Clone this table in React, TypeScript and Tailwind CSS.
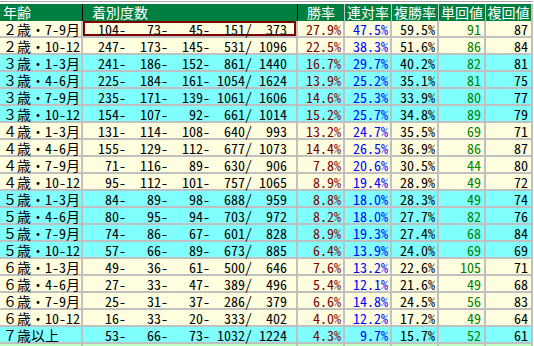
import React from "react";

type Row = {
  label: string;
  counts: number[];
  win: string;
  place2: string;
  place3: string;
  winRet: number;
  placeRet: number;
  cyan?: boolean;
};

const ROWS: Row[] = [
  { label: "２歳・7-9月", counts: [104, 73, 45, 151, 373], win: "27.9%", place2: "47.5%", place3: "59.5%", winRet: 91, placeRet: 87 },
  { label: "２歳・10-12", counts: [247, 173, 145, 531, 1096], win: "22.5%", place2: "38.3%", place3: "51.6%", winRet: 86, placeRet: 84 },
  { label: "３歳・1-3月", counts: [241, 186, 152, 861, 1440], win: "16.7%", place2: "29.7%", place3: "40.2%", winRet: 82, placeRet: 81, cyan: true },
  { label: "３歳・4-6月", counts: [225, 184, 161, 1054, 1624], win: "13.9%", place2: "25.2%", place3: "35.1%", winRet: 81, placeRet: 75, cyan: true },
  { label: "３歳・7-9月", counts: [235, 171, 139, 1061, 1606], win: "14.6%", place2: "25.3%", place3: "33.9%", winRet: 80, placeRet: 77, cyan: true },
  { label: "３歳・10-12", counts: [154, 107, 92, 661, 1014], win: "15.2%", place2: "25.7%", place3: "34.8%", winRet: 89, placeRet: 79, cyan: true },
  { label: "４歳・1-3月", counts: [131, 114, 108, 640, 993], win: "13.2%", place2: "24.7%", place3: "35.5%", winRet: 69, placeRet: 71 },
  { label: "４歳・4-6月", counts: [155, 129, 112, 677, 1073], win: "14.4%", place2: "26.5%", place3: "36.9%", winRet: 86, placeRet: 87 },
  { label: "４歳・7-9月", counts: [71, 116, 89, 630, 906], win: "7.8%", place2: "20.6%", place3: "30.5%", winRet: 44, placeRet: 80 },
  { label: "４歳・10-12", counts: [95, 112, 101, 757, 1065], win: "8.9%", place2: "19.4%", place3: "28.9%", winRet: 49, placeRet: 72 },
  { label: "５歳・1-3月", counts: [84, 89, 98, 688, 959], win: "8.8%", place2: "18.0%", place3: "28.3%", winRet: 49, placeRet: 74, cyan: true },
  { label: "５歳・4-6月", counts: [80, 95, 94, 703, 972], win: "8.2%", place2: "18.0%", place3: "27.7%", winRet: 82, placeRet: 76, cyan: true },
  { label: "５歳・7-9月", counts: [74, 86, 67, 601, 828], win: "8.9%", place2: "19.3%", place3: "27.4%", winRet: 68, placeRet: 84, cyan: true },
  { label: "５歳・10-12", counts: [57, 66, 89, 673, 885], win: "6.4%", place2: "13.9%", place3: "24.0%", winRet: 69, placeRet: 69, cyan: true },
  { label: "６歳・1-3月", counts: [49, 36, 61, 500, 646], win: "7.6%", place2: "13.2%", place3: "22.6%", winRet: 105, placeRet: 71 },
  { label: "６歳・4-6月", counts: [27, 33, 47, 389, 496], win: "5.4%", place2: "12.1%", place3: "21.6%", winRet: 49, placeRet: 68 },
  { label: "６歳・7-9月", counts: [25, 31, 37, 286, 379], win: "6.6%", place2: "14.8%", place3: "24.5%", winRet: 56, placeRet: 83 },
  { label: "６歳・10-12", counts: [16, 33, 20, 333, 402], win: "4.0%", place2: "12.2%", place3: "17.2%", winRet: 49, placeRet: 64 },
  { label: "７歳以上", counts: [53, 66, 73, 1032, 1224], win: "4.3%", place2: "9.7%", place3: "15.7%", winRet: 52, placeRet: 61, cyan: true },
];

const Counts: React.FC<{ counts: number[] }> = ({ counts }) => (
  <div className="flex justify-end">
    {counts.map((n, i) => (
      <React.Fragment key={i}>
        <span className="w-[35px] text-right">{n}</span>
        {i < 4 && <span className="w-[7px] text-center">{i === 3 ? "/" : "-"}</span>}
      </React.Fragment>
    ))}
  </div>
);

// every body cell: 15px tall, text baseline near the bottom like the original grid
const cell = "h-[15px] pt-[2px] leading-[13px] whitespace-nowrap";

const App: React.FC = () => {
  return (
    <div className="w-[534px] h-[346px] overflow-hidden bg-white text-[14px] leading-[17px] text-black font-['Noto_Sans_Mono_CJK_JP','Noto_Sans_CJK_JP',monospace]">
      {/* top strip */}
      <div className="h-[4px] pt-[1px]">
        <div className="h-[1px] w-[533px] bg-[#a8a8a8]" />
      </div>

      {/* header */}
      <div className="flex h-[17px] text-white">
        <div className="w-[83px] bg-[#008040] border-r border-black pl-[3px]">年齢</div>
        <div className="w-[215px] bg-[#008040] border-r border-black pl-[9px]">着別度数</div>
        <div className="w-[47px] bg-[#008040] border-r border-[#c8c8c8] text-center">勝率</div>
        <div className="w-[47px] bg-[#008040] border-r border-[#c8c8c8] text-center">連対率</div>
        <div className="w-[47px] bg-[#008040] border-r border-[#c8c8c8] text-center">複勝率</div>
        <div className="w-[47px] bg-[#008040] border-r border-[#c8c8c8] text-center">単回値</div>
        <div className="w-[45px] bg-[#008040] text-center">複回値</div>
        <div className="w-[2px] bg-[#c0c0c0]" />
      </div>

      {/* body */}
      <div className="grid w-[533px] grid-cols-[81px_213px_45px_45px_45px_45px_45px] gap-[2px] bg-[#c0c0c0] pr-[2px]">
        {ROWS.map((r, idx) => {
          const bg = r.cyan ? "bg-[#80ffff]" : "bg-[#ffffe0]";
          return (
            <React.Fragment key={r.label}>
              <div className={`${cell} pl-[3px] ${bg}`}>{r.label}</div>
              <div className={`${cell} pr-[9px] ${bg} ${idx === 0 ? "shadow-[inset_0_0_0_2px_#800000]" : ""}`}>
                <Counts counts={r.counts} />
              </div>
              <div className={`${cell} pr-[2px] text-right text-[#800000] ${bg}`}>{r.win}</div>
              <div className={`${cell} pr-[2px] text-right text-[#0000ff] ${bg}`}>{r.place2}</div>
              <div className={`${cell} pr-[2px] text-right ${bg}`}>{r.place3}</div>
              <div className={`${cell} pr-[3px] text-right text-[#008000] ${bg}`}>{r.winRet}</div>
              <div className={`${cell} pr-[3px] text-right ${bg}`}>{r.placeRet}</div>
            </React.Fragment>
          );
        })}
        {/* next row, cut off by the window */}
        <div className="h-[2px] bg-[#c0ffc0]" />
        <div className="h-[2px] bg-[#c0ffc0]" />
        <div className="h-[2px] bg-[#c0ffc0]" />
        <div className="h-[2px] bg-[#c0ffc0]" />
        <div className="h-[2px] bg-[#c0ffc0]" />
        <div className="h-[2px] bg-[#c0ffc0]" />
        <div className="h-[2px] bg-[#c0ffc0]" />
      </div>
    </div>
  );
};

export default App;
